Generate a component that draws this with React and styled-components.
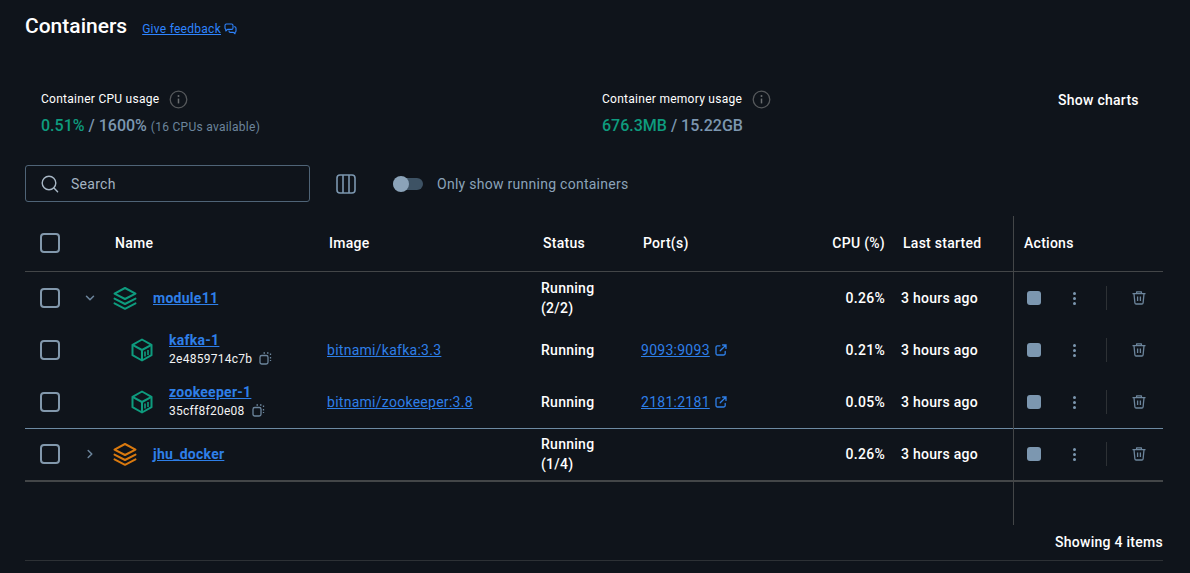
import React from 'react'
import styled, { createGlobalStyle } from 'styled-components'

const COLORS = {
  bg: '#0f141b',
  white: '#ffffff',
  link: '#2e7fe8',
  feedback: '#2e84ff',
  green: '#0e9b7e',
  orange: '#d9790f',
  slate: '#7c97b0',
  muted: '#6c859c',
  line: '#434648',
}

const ROWS = [
  { id: 'module11', kind: 'group', name: 'module11', open: true, status: ['Running', '(2/2)'], cpu: '0.26%', started: '3 hours ago', color: COLORS.green },
  { id: 'kafka', kind: 'child', name: 'kafka-1', hash: '2e4859714c7b', image: 'bitnami/kafka:3.3', port: '9093:9093', status: ['Running'], cpu: '0.21%', started: '3 hours ago' },
  { id: 'zookeeper', kind: 'child', name: 'zookeeper-1', hash: '35cff8f20e08', image: 'bitnami/zookeeper:3.8', port: '2181:2181', status: ['Running'], cpu: '0.05%', started: '3 hours ago', divider: true },
  { id: 'jhu', kind: 'group', name: 'jhu_docker', open: false, status: ['Running', '(1/4)'], cpu: '0.26%', started: '3 hours ago', color: COLORS.orange, last: true },
]

const GlobalStyle = createGlobalStyle`
  html, body {
    margin: 0;
    background: ${COLORS.bg};
    font-family: Roboto, "Liberation Sans", sans-serif;
    color: ${COLORS.white};
  }
`

const StackIcon = ({ color }) => (
  <svg width="24" height="24" viewBox="0 0 24 24" fill="none" stroke={color} strokeWidth="2" strokeLinejoin="round" strokeLinecap="round">
    <path d="M12 2 L22.5 7.6 L12 13 L1.5 7.6 Z" />
    <path d="M1.5 12.6 L12 18 L22.5 12.6" />
    <path d="M1.5 17.4 L12 22.8 L22.5 17.4" />
  </svg>
)

const BoxIcon = () => (
  <svg width="22" height="24" viewBox="0 0 22 24" fill="none" stroke={COLORS.green} strokeWidth="2" strokeLinejoin="round">
    <path d="M11 1.5 L20.5 6.8 V17.2 L11 22.5 L1.5 17.2 V6.8 Z" />
    <path d="M1.5 6.8 L11 12 L20.5 6.8 M11 12 V22.5" />
    <path d="M14 13.5 V18.5 M17 12 V17" strokeWidth="1.6" />
  </svg>
)

const CopyIcon = () => (
  <svg width="13" height="13" viewBox="0 0 13 13" fill="none" stroke={COLORS.muted} strokeWidth="1.3">
    <rect x="1" y="3.5" width="8" height="8.5" rx="1.8" />
    <path d="M4.5 1 H6 M8 1 H9.5 M11.5 1.5 V3 M11.5 5 V6.5 M11.5 8 V9" />
  </svg>
)

const ExternalIcon = () => (
  <svg width="12" height="12" viewBox="0 0 12 12" fill="none" stroke={COLORS.link} strokeWidth="1.3" strokeLinecap="round">
    <path d="M5 1.8 H2.4 A1.4 1.4 0 0 0 1 3.2 V9.6 A1.4 1.4 0 0 0 2.4 11 H8.8 A1.4 1.4 0 0 0 10.2 9.6 V7.4" />
    <path d="M5.2 6.8 L11 1 M7.6 1 H11 V4.4" />
  </svg>
)

const FeedbackIcon = () => (
  <svg width="13" height="12" viewBox="0 0 13 12" fill="none" stroke={COLORS.feedback} strokeWidth="1.1" strokeLinejoin="round">
    <path d="M2.4 1 H7.6 A1.4 1.4 0 0 1 9 2.4 V5 A1.4 1.4 0 0 1 7.6 6.4 H3.6 L1.8 8 V6.3 A1.4 1.4 0 0 1 1 5 V2.4 A1.4 1.4 0 0 1 2.4 1 Z" />
    <path d="M10 3.8 H10.6 A1.4 1.4 0 0 1 12 5.2 V8 A1.4 1.4 0 0 1 11 9.3 V10.8 L9.4 9.4 H6.4 A1.4 1.4 0 0 1 5 8 V7.6" />
  </svg>
)

const InfoIcon = () => (
  <svg width="19" height="19" viewBox="0 0 19 19" fill="none">
    <circle cx="9.5" cy="9.5" r="8.3" stroke="#55585b" strokeWidth="1.3" />
    <circle cx="9.5" cy="6" r="1" fill="#6b6e70" />
    <path d="M9.5 8.6 V13.4" stroke="#6b6e70" strokeWidth="1.5" />
  </svg>
)

const SearchIcon = () => (
  <svg width="18" height="18" viewBox="0 0 18 18" fill="none" stroke="#a9b8c6" strokeWidth="1.4" strokeLinecap="round">
    <circle cx="8" cy="8" r="6.8" />
    <path d="M13 13 L16.6 16.8" />
  </svg>
)

const ColumnsIcon = () => (
  <svg width="20" height="20" viewBox="0 0 20 20" fill="none" stroke={COLORS.slate} strokeWidth="1.6">
    <rect x="1" y="1" width="18" height="18" rx="3" />
    <path d="M7 1 V19 M13 1 V19" />
  </svg>
)

const Chevron = ({ open }) => (
  <svg width="10" height="10" viewBox="0 0 10 10" fill="none" stroke={COLORS.muted} strokeWidth="1.5" strokeLinecap="round" strokeLinejoin="round">
    <path d={open ? 'M1.5 3.2 L5 6.8 L8.5 3.2' : 'M3.2 1.5 L6.8 5 L3.2 8.5'} />
  </svg>
)

const TrashIcon = () => (
  <svg width="14" height="14" viewBox="0 0 14 14" fill="none" stroke={COLORS.muted} strokeWidth="1.3" strokeLinejoin="round">
    <path d="M0.5 2.6 H13.5 M4.6 2.4 V0.8 H9.4 V2.4" />
    <path d="M2 2.8 L2.9 12 A1.2 1.2 0 0 0 4.1 13 H9.9 A1.2 1.2 0 0 0 11.1 12 L12 2.8" />
    <path d="M5.6 5.6 V10 M8.4 5.6 V10" />
  </svg>
)

const App = () => (
  <>
    <GlobalStyle />
    <Page>
      <TitleRow>
        <Title>Containers</Title>
        <Feedback href="#">Give feedback</Feedback>
        <FeedbackIcon />
      </TitleRow>

      <Stats>
        <Stat>
          <StatLabel>Container CPU usage <InfoIcon /></StatLabel>
          <StatValue>
            <Used>0.51%</Used> / 1600% <Note>(16 CPUs available)</Note>
          </StatValue>
        </Stat>
        <Stat>
          <StatLabel>Container memory usage <InfoIcon /></StatLabel>
          <StatValue>
            <Used>676.3MB</Used> / 15.22GB
          </StatValue>
        </Stat>
        <ShowCharts>Show charts</ShowCharts>
      </Stats>

      <Toolbar>
        <SearchBox>
          <SearchIcon />
          <span>Search</span>
        </SearchBox>
        <ColumnsButton><ColumnsIcon /></ColumnsButton>
        <Toggle><Knob /></Toggle>
        <ToggleLabel>Only show running containers</ToggleLabel>
      </Toolbar>

      <Table>
        <ActionsRule />
        <HeadRow>
          <CheckCell><Checkbox /></CheckCell>
          <HeadCell $name>Name</HeadCell>
          <HeadCell>Image</HeadCell>
          <HeadCell>Status</HeadCell>
          <HeadCell>Port(s)</HeadCell>
          <HeadCell $right>CPU (%)</HeadCell>
          <HeadCell $started>Last started</HeadCell>
          <HeadCell $actions>Actions</HeadCell>
        </HeadRow>

        {ROWS.map(row => (
          <Row key={row.id} $divider={row.divider} $last={row.last}>
            <CheckCell><Checkbox /></CheckCell>
            {row.kind === 'group' ? (
              <NameCell>
                <ChevronSlot><Chevron open={row.open} /></ChevronSlot>
                <StackIcon color={row.color} />
                <GroupName href="#">{row.name}</GroupName>
              </NameCell>
            ) : (
              <NameCell $child>
                <BoxIcon />
                <ChildText>
                  <GroupName href="#" $flush>{row.name}</GroupName>
                  <Hash>{row.hash} <CopyIcon /></Hash>
                </ChildText>
              </NameCell>
            )}
            <div><PlainLink href="#">{row.image}</PlainLink></div>
            <Status>{row.status.map(line => <div key={line}>{line}</div>)}</Status>
            <div>
              {row.port && (
                <PortWrap>
                  <PlainLink href="#">{row.port}</PlainLink>
                  <ExternalIcon />
                </PortWrap>
              )}
            </div>
            <Cpu>{row.cpu}</Cpu>
            <Started>{row.started}</Started>
            <Actions>
              <StopButton />
              <Dots><i /><i /><i /></Dots>
              <ActionRule />
              <TrashIcon />
            </Actions>
          </Row>
        ))}
      </Table>

      <Footer>Showing 4 items</Footer>
    </Page>
  </>
)

const COLUMNS = '60px 242px 214px 100px 160px 84px 128px 150px'

const Page = styled.div`
  height: 573px;
  overflow: hidden;
  padding: 14px 27px 0 25px;
  box-sizing: border-box;
  letter-spacing: 0.27px;
`

const TitleRow = styled.div`
  display: flex;
  align-items: center;
  height: 24px;
  svg {
    margin: 5px 0 0 3px;
  }
`

const Title = styled.h1`
  margin: 0 15px 0 0;
  font-size: 21px;
  font-weight: 500;
  line-height: 24px;
  letter-spacing: 0;
`

const Feedback = styled.a`
  margin-top: 5px;
  color: ${COLORS.feedback};
  font-size: 12px;
  text-decoration: underline;
`

const Stats = styled.div`
  display: grid;
  grid-template-columns: 561px 456px auto;
  margin-top: 51px;
  padding-left: 16px;
`

const Stat = styled.div`
  display: flex;
  flex-direction: column;
  gap: 7px;
`

const StatLabel = styled.div`
  display: flex;
  align-items: center;
  gap: 10px;
  height: 20px;
  font-size: 12px;
`

const StatValue = styled.div`
  color: ${COLORS.slate};
  font-size: 16px;
  font-weight: 500;
  line-height: 20px;
  letter-spacing: 0;
`

const Used = styled.span`
  color: ${COLORS.green};
`

const Note = styled.span`
  color: ${COLORS.muted};
  font-size: 12px;
  font-weight: 400;
  letter-spacing: 0.27px;
`

const ShowCharts = styled.div`
  font-size: 14px;
  font-weight: 500;
  line-height: 22px;
`

const Toolbar = styled.div`
  display: flex;
  align-items: center;
  margin-top: 28px;
`

const SearchBox = styled.div`
  display: flex;
  align-items: center;
  gap: 12px;
  width: 285px;
  height: 37px;
  padding-left: 15px;
  box-sizing: border-box;
  border: 1px solid #4f6477;
  border-radius: 3px;
  color: #a3b3c2;
  font-size: 14px;
`

const ColumnsButton = styled.div`
  display: flex;
  margin-left: 26px;
`

const Toggle = styled.div`
  position: relative;
  width: 30px;
  height: 12px;
  margin-left: 37px;
  border-radius: 6px;
  background: #3d5264;
`

const Knob = styled.span`
  position: absolute;
  left: 0;
  top: -2px;
  width: 16px;
  height: 16px;
  border-radius: 50%;
  background: #8ba3b9;
`

const ToggleLabel = styled.span`
  margin-left: 14px;
  color: #8ba3b9;
  font-size: 14px;
`

const Table = styled.div`
  position: relative;
  margin-top: 14px;
  height: 309px;
`

const ActionsRule = styled.div`
  position: absolute;
  left: 988px;
  top: 0;
  bottom: 0;
  width: 1px;
  background: ${COLORS.line};
`

const HeadRow = styled.div`
  display: grid;
  grid-template-columns: ${COLUMNS};
  align-items: center;
  height: 53px;
  padding-bottom: 2px;
  border-bottom: 1px solid ${COLORS.line};
  font-size: 14px;
  font-weight: 500;
`

const HeadCell = styled.div`
  padding-left: ${p => (p.$name ? '30px' : p.$started ? '18px' : p.$actions ? '11px' : p.$right ? '0' : '2px')};
  text-align: ${p => (p.$right ? 'right' : 'left')};
`

const CheckCell = styled.div`
  display: flex;
  padding-left: 15px;
`

const Checkbox = styled.span`
  width: 20px;
  height: 20px;
  box-sizing: border-box;
  border: 2px solid #8298ac;
  border-radius: 4px;
`

const Row = styled.div`
  display: grid;
  grid-template-columns: ${COLUMNS};
  align-items: center;
  height: 52px;
  font-size: 14px;
  ${p => p.$divider && 'border-bottom: 1px solid #6d8aa3; height: 53px; box-sizing: border-box;'}
  ${p => p.$last && `border-bottom: 2px solid ${COLORS.line}; height: 53px; box-sizing: border-box; padding-bottom: 1px;`}
`

const NameCell = styled.div`
  display: flex;
  align-items: center;
  padding-left: ${p => (p.$child ? '46px' : '0')};
  gap: ${p => (p.$child ? '16px' : '0')};
`

const ChevronSlot = styled.span`
  display: flex;
  width: 28px;
`

const GroupName = styled.a`
  margin-left: ${p => (p.$flush ? '0' : '16px')};
  color: ${COLORS.link};
  font-weight: 700;
  text-decoration: underline;
`

const ChildText = styled.div`
  display: flex;
  flex-direction: column;
  gap: 2px;
  margin-top: -1px;
`

const Hash = styled.div`
  display: flex;
  align-items: center;
  gap: 7px;
  height: 18px;
  font-size: 12px;
  color: #f2f3f4;
`

const PlainLink = styled.a`
  color: ${COLORS.link};
  text-decoration: underline;
`

const Status = styled.div`
  font-weight: 500;
  line-height: 20px;
`

const PortWrap = styled.span`
  display: inline-flex;
  align-items: center;
  gap: 5px;
`

const Cpu = styled.div`
  font-weight: 500;
  text-align: right;
`

const Started = styled.div`
  padding-left: 16px;
  font-weight: 500;
`

const Actions = styled.div`
  display: flex;
  align-items: center;
  padding-left: 14px;
`

const StopButton = styled.span`
  width: 14px;
  height: 14px;
  border-radius: 3px;
  background: ${COLORS.slate};
`

const Dots = styled.span`
  display: flex;
  flex-direction: column;
  gap: 2px;
  margin-left: 32px;
  i {
    width: 3px;
    height: 3px;
    border-radius: 50%;
    background: ${COLORS.slate};
  }
`

const ActionRule = styled.span`
  width: 1px;
  height: 24px;
  margin: 0 25px 0 30px;
  background: #2d3135;
`

const Footer = styled.div`
  height: 36px;
  padding-top: 8px;
  box-sizing: border-box;
  border-bottom: 1px solid #2d3135;
  text-align: right;
  font-size: 14px;
  font-weight: 500;
  line-height: 18px;
`

export default App
